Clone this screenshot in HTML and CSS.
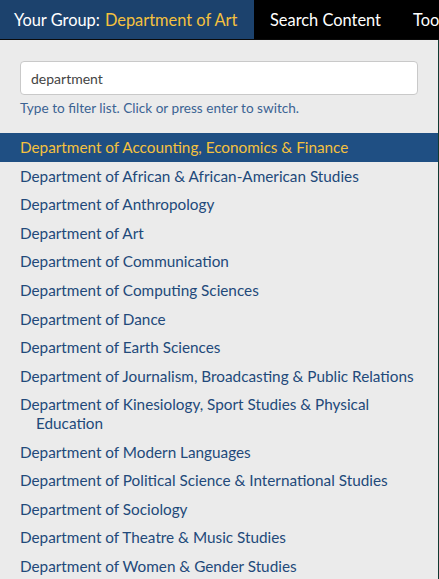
FILE: index.html
```html
<!DOCTYPE html>
<html>
<head>
<meta charset="utf-8">
<link rel="stylesheet" href="styles.css">
</head>
<body>
<nav class="topnav">
  <div class="tab-group">Your Group: <span class="tab-current">Department of Art</span></div>
  <div class="tab-link">Search Content</div>
  <div class="tab-link">Tools</div>
</nav>
<div class="panel">
  <div class="filter">
    <input class="filter-input" type="text" value="department">
    <p class="filter-help">Type to filter list. Click or press enter to switch.</p>
  </div>
  <ul class="group-list">
    <li class="group-item active">Department of Accounting, Economics &amp; Finance</li>
    <li class="group-item">Department of African &amp; African-American Studies</li>
    <li class="group-item">Department of Anthropology</li>
    <li class="group-item">Department of Art</li>
    <li class="group-item">Department of Communication</li>
    <li class="group-item">Department of Computing Sciences</li>
    <li class="group-item">Department of Dance</li>
    <li class="group-item">Department of Earth Sciences</li>
    <li class="group-item">Department of Journalism, Broadcasting &amp; Public Relations</li>
    <li class="group-item">Department of Kinesiology, Sport Studies &amp; Physical Education</li>
    <li class="group-item">Department of Modern Languages</li>
    <li class="group-item">Department of Political Science &amp; International Studies</li>
    <li class="group-item">Department of Sociology</li>
    <li class="group-item">Department of Theatre &amp; Music Studies</li>
    <li class="group-item">Department of Women &amp; Gender Studies</li>
  </ul>
</div>
</body>
</html>
```
FILE: styles.css
```css
html, body {
  margin: 0;
  padding: 0;
  background: #ffffff;
  font-family: Lato, "Noto Sans", sans-serif;
  overflow: hidden;
}
.topnav {
  display: flex;
  height: 39px;
  background: #000;
  border-bottom: 1px solid #0a0a0a;
  white-space: nowrap;
  overflow: hidden;
  font-size: 16.4px;
  color: #fff;
}
.tab-group {
  box-sizing: border-box;
  background: #1c426d;
  padding: 0 0 0 14px;
  width: 254px;
  flex: none;
  display: flex;
  align-items: center;
}
.tab-current {
  color: #f5c13e;
  margin-left: 5px;
}
.tab-link {
  display: flex;
  align-items: center;
  padding: 0 16px;
}
.panel {
  width: 438px;
  background: #ebebeb;
  border-right: 1px solid #103a32;
  min-height: 560px;
}
.filter {
  padding: 21px 20px 0 20px;
}
.filter-input {
  box-sizing: border-box;
  width: 398px;
  height: 34px;
  border: 1px solid #c9c9c9;
  border-radius: 4px;
  background: #fff;
  padding: 0 10px;
  font-family: Lato, "Noto Sans", sans-serif;
  font-size: 14px;
  color: #444;
  outline: none;
}
.filter-help {
  margin: 5px 0 0 0;
  font-size: 13.6px;
  line-height: 16px;
  color: #3b6393;
}
.group-list {
  list-style: none;
  margin: 17px 0 0 0;
  padding: 0;
}
.group-item {
  padding: 5px 20px 5px 36px;
  text-indent: -16px;
  font-size: 15.3px;
  line-height: 18.6px;
  color: #22497a;
}
.group-item.active {
  background: #1f4f83;
  color: #f5c13e;
}
```
